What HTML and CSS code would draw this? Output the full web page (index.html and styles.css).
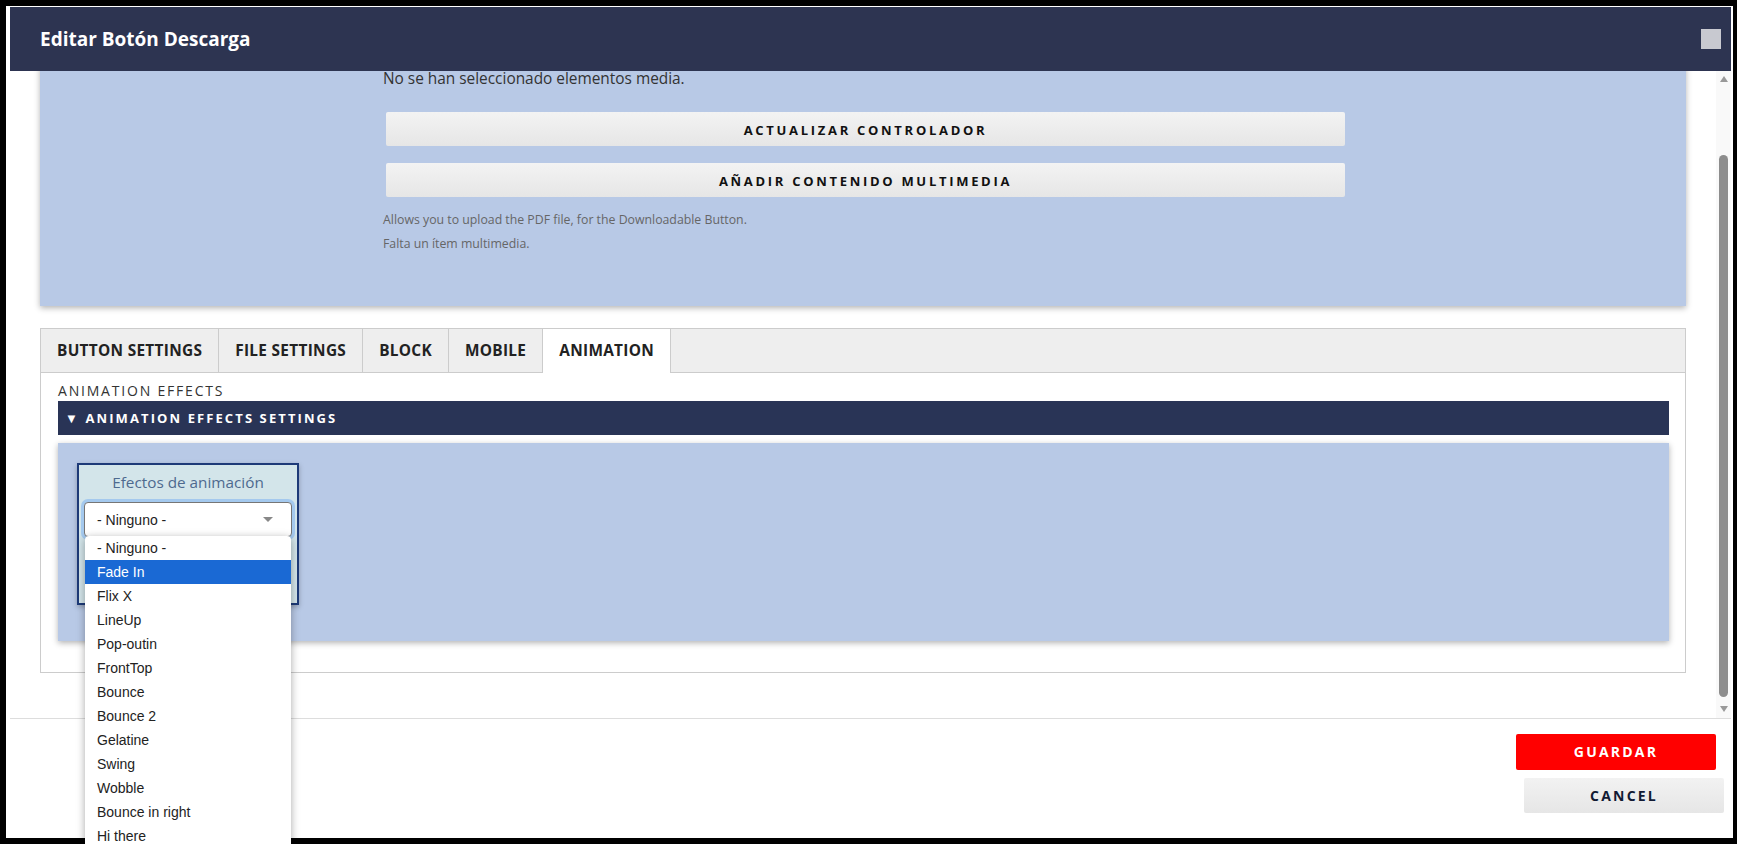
FILE: index.html
```html
<html lang="es"><head>
    <meta charset="UTF-8">
    <meta name="viewport" content="width=device-width, initial-scale=1.0">
    <title>Editar Botón Descarga</title>
    <link rel="stylesheet" href="styles.css">
</head>
<body>
    <div class="modal">
        <div class="modal_head">
            <h1 class="modal_title">Editar Botón Descarga</h1>
            <span class="modal_close"></span>
        </div>

        <div class="modal_body">
            <div class="scroll_view">
                <div class="media_panel">
                    <div class="media_col">
                        <p class="media_msg">No se han seleccionado elementos media.</p>
                        <div class="btn_gray">ACTUALIZAR CONTROLADOR</div>
                        <div class="btn_gray">AÑADIR CONTENIDO MULTIMEDIA</div>
                        <p class="help_txt">Allows you to upload the PDF file, for the Downloadable Button.</p>
                        <p class="help_txt">Falta un ítem multimedia.</p>
                    </div>
                </div>

                <div class="tabs">
                    <ul class="tab_bar">
                        <li class="tab">BUTTON SETTINGS</li>
                        <li class="tab">FILE SETTINGS</li>
                        <li class="tab">BLOCK</li>
                        <li class="tab">MOBILE</li>
                        <li class="tab tab_on">ANIMATION</li>
                    </ul>
                    <div class="tab_pane">
                        <div class="pane_label">ANIMATION EFFECTS</div>
                        <div class="fold_bar">&#9660; ANIMATION EFFECTS SETTINGS</div>
                        <div class="fold_body">
                            <div class="field_box">
                                <div class="field_label">Efectos de animación</div>
                                <div class="select_box">
                                    <span>- Ninguno -</span>
                                    <span class="caret"></span>
                                </div>
                            </div>
                        </div>
                    </div>
                </div>
            </div>

            <div class="scrollbar">
                <span class="sb_up"></span>
                <span class="sb_thumb"></span>
                <span class="sb_down"></span>
            </div>
        </div>

        <div class="modal_foot">
            <div class="btn_save">GUARDAR</div>
            <div class="btn_cancel">CANCEL</div>
        </div>
    </div>

    <!-- lista abierta del select -->
    <ul class="option_list">
        <li>- Ninguno -</li>
        <li class="opt_on">Fade In</li>
        <li>Flix X</li>
        <li>LineUp</li>
        <li>Pop-outin</li>
        <li>FrontTop</li>
        <li>Bounce</li>
        <li>Bounce 2</li>
        <li>Gelatine</li>
        <li>Swing</li>
        <li>Wobble</li>
        <li>Bounce in right</li>
        <li>Hi there</li>
    </ul>
</body></html>
```

FILE: styles.css
```css
/* modal editar boton descarga */
body {
    margin: 0;
    width: 1737px;
    height: 844px;
    overflow: hidden;
    background: #000;
    font-family: "Open Sans", Roboto, sans-serif;
    color: #333;
    position: relative;
}
p, ul, h1 { margin: 0; padding: 0; }
ul { list-style: none; }

.modal {
    margin: 6px 4px 0 6px;
    height: 832px;
    background: #fff;
    padding: 1px 2px 0 4px;
    box-sizing: border-box;
    display: flex;
    flex-direction: column;
}
.modal_head {
    height: 64px;
    background: #2d3451;
    display: flex;
    align-items: center;
    justify-content: space-between;
    padding: 0 10px 0 30px;
    flex-shrink: 0;
}
.modal_title {
    color: #fff;
    font-size: 19px;
    font-weight: 700;
}
.modal_close {
    width: 20px;
    height: 20px;
    background: #c8c9d0;
    margin-top: 22px;
    align-self: flex-start;
}

.modal_body {
    height: 647px;
    display: flex;
    flex-shrink: 0;
}
.scroll_view {
    flex: 1;
    overflow: hidden;
    padding: 0 30px;
}

/* panel media (parte de arriba ya scrolleada) */
.media_panel {
    margin-top: -20px;
    background: #b8c9e6;
    box-shadow: 0 2px 6px rgba(0,0,0,0.3);
    padding: 20px 0 50px 343px;
}
.media_col { width: 962px; }
.media_msg {
    font-size: 15.4px;
    line-height: 16px;
    color: #333;
    margin-bottom: 25px;
}
.btn_gray {
    margin-left: 3px;
    height: 34px;
    line-height: 36px;
    background: linear-gradient(#f3f3f3, #e6e6e6);
    border-radius: 2px;
    text-align: center;
    font-size: 13px;
    font-weight: 700;
    letter-spacing: 2.7px;
    color: #111;
    margin-bottom: 17px;
}
.btn_gray + .help_txt { margin-top: -6px; }
.help_txt {
    font-size: 12.3px;
    line-height: 24px;
    color: #666;
}

/* tabs */
.tabs {
    margin-top: 22px;
    border: 1px solid #ccc;
}
.tab_bar {
    display: flex;
    background: #eee;
    border-bottom: 1px solid #ccc;
    height: 43px;
}
.tab {
    padding: 0 16px;
    line-height: 43px;
    font-size: 15.4px;
    font-weight: 700;
    letter-spacing: 0.3px;
    color: #222;
    border-right: 1px solid #ccc;
}
.tab_on {
    background: #fff;
    height: 44px;
}
.tab_pane { padding: 8px 16px 31px 17px; }
.pane_label {
    font-size: 14px;
    line-height: 20px;
    letter-spacing: 1.8px;
    color: #333;
}
.fold_bar {
    height: 34px;
    line-height: 34px;
    background: #293456;
    color: #fff;
    font-size: 13px;
    font-weight: 700;
    letter-spacing: 2.1px;
    padding-left: 7px;
}
.fold_body {
    margin-top: 8px;
    height: 198px;
    background: #b8c9e6;
    box-shadow: 0 2px 6px rgba(0,0,0,0.3);
    padding: 20px 0 0 19px;
    box-sizing: border-box;
}
.field_box {
    width: 222px;
    height: 142px;
    box-sizing: border-box;
    border: 2px solid #1d3a78;
    background: #d3e5ea;
    box-shadow: 0 2px 5px rgba(0,0,0,0.25);
    padding: 7px 5px 0 5px;
}
.field_label {
    text-align: center;
    font-size: 15.3px;
    line-height: 20px;
    color: #4e6a8f;
    margin-bottom: 10px;
}
.select_box {
    height: 35px;
    box-sizing: border-box;
    background: #fff;
    border: 1px solid #767676;
    border-radius: 4px;
    box-shadow: 0 0 0 3px #a4c9ee;
    display: flex;
    align-items: center;
    justify-content: space-between;
    padding: 0 18px 0 12px;
    font-family: "Liberation Sans", Arial, sans-serif;
    font-size: 14px;
    color: #222;
}
.caret {
    width: 0;
    height: 0;
    border-left: 5px solid transparent;
    border-right: 5px solid transparent;
    border-top: 5px solid #888;
}

/* barra de scroll */
.scrollbar {
    width: 15px;
    background: #f9f9f9;
    display: flex;
    flex-direction: column;
    align-items: center;
    padding: 5px 0 6px;
    box-sizing: border-box;
}
.sb_up, .sb_down {
    width: 0;
    height: 0;
    border-left: 4.5px solid transparent;
    border-right: 4.5px solid transparent;
}
.sb_up { border-bottom: 6px solid #999; }
.sb_down { border-top: 6px solid #999; }
.sb_thumb {
    flex: 1;
    width: 9px;
    margin: 73px 0 9px;
    border-radius: 5px;
    background: #8d8d8d;
}

/* pie */
.modal_foot {
    flex: 1;
    border-top: 1px solid #ddd;
    display: flex;
    flex-direction: column;
    align-items: flex-end;
    padding-top: 15px;
}
.btn_save, .btn_cancel {
    width: 200px;
    text-align: center;
    font-size: 14px;
    font-weight: 700;
    letter-spacing: 2.2px;
    border-radius: 2px;
}
.btn_save {
    height: 36px;
    line-height: 36px;
    background: #f00;
    color: #fff;
    margin-right: 15px;
}
.btn_cancel {
    height: 35px;
    line-height: 35px;
    margin-top: 8px;
    margin-right: 7px;
    background: linear-gradient(#f2f2f2, #e6e6e6);
    color: #111a33;
}

/* dropdown abierto del select nativo */
.option_list {
    position: absolute;
    left: 85px;
    top: 536px;
    width: 206px;
    height: 308px;
    background: #fff;
    border-radius: 4px 4px 0 0;
    box-shadow: 0 2px 8px rgba(0,0,0,0.35);
    font-family: "Liberation Sans", Arial, sans-serif;
    font-size: 14px;
    color: #222;
    overflow: hidden;
}
.option_list li {
    height: 24px;
    line-height: 24px;
    padding-left: 12px;
}
.option_list .opt_on {
    background: #1a69d4;
    color: #fff;
}
```
